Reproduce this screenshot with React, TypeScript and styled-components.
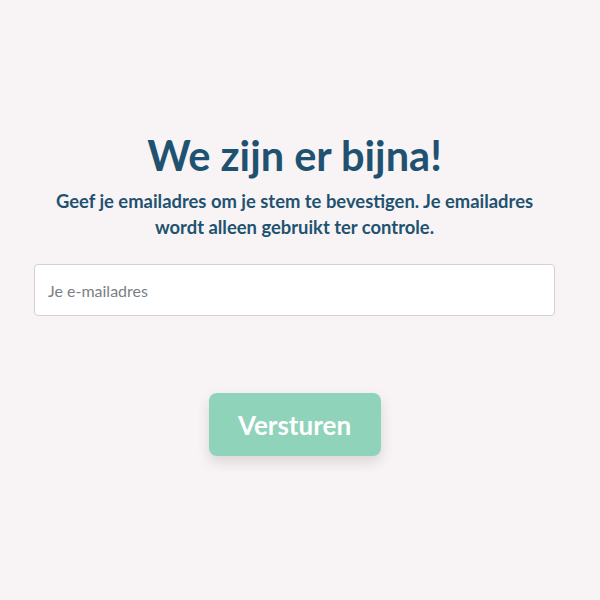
import { useState } from 'react';
import styled, { createGlobalStyle } from 'styled-components';

const GlobalStyle = createGlobalStyle`
  html, body {
    margin: 0;
    padding: 0;
    background: #f8f4f5;
  }
  body {
    font-family: Lato, "Open Sans", "Liberation Sans", sans-serif;
  }
  * { box-sizing: border-box; }
`;

const Page = styled.main`
  width: 600px;
  height: 600px;
  background: #f8f4f5;
  display: flex;
  flex-direction: column;
  align-items: center;
  padding: 128px 45px 0 34px;
`;

const Title = styled.h1`
  margin: 0;
  color: #1f5270;
  font-size: 41.5px;
  font-weight: 700;
  line-height: 54px;
  text-align: center;
`;

const Subtitle = styled.p`
  margin: 6px 0 0 0;
  color: #1f5270;
  font-size: 18.4px;
  font-weight: 700;
  line-height: 26px;
  text-align: center;
  max-width: 500px;
`;

const EmailInput = styled.input`
  margin-top: 24px;
  width: 100%;
  height: 52px;
  padding: 0 13px;
  border: 1px solid #d6d0d3;
  border-radius: 4px;
  background: #ffffff;
  font-family: inherit;
  font-size: 16px;
  color: #333;
  outline: none;

  &::placeholder {
    color: #7a7f85;
  }
`;

const SubmitButton = styled.button`
  margin-top: 77px;
  width: 172px;
  height: 63px;
  border: none;
  border-radius: 8px;
  background: #8fd3bb;
  color: #ffffff;
  font-family: inherit;
  font-size: 26px;
  font-weight: 700;
  cursor: pointer;
  box-shadow: 0 6px 14px rgba(0, 0, 0, 0.12);
`;

export default function App() {
  const [email, setEmail] = useState('');

  return (
    <>
      <GlobalStyle />
      <Page>
        <Title>We zijn er bijna!</Title>
        <Subtitle>
          Geef je emailadres om je stem te bevestigen. Je emailadres wordt
          alleen gebruikt ter controle.
        </Subtitle>
        <EmailInput
          type="email"
          placeholder="Je e-mailadres"
          value={email}
          onChange={(e) => setEmail(e.target.value)}
        />
        <SubmitButton type="button">Versturen</SubmitButton>
      </Page>
    </>
  );
}
